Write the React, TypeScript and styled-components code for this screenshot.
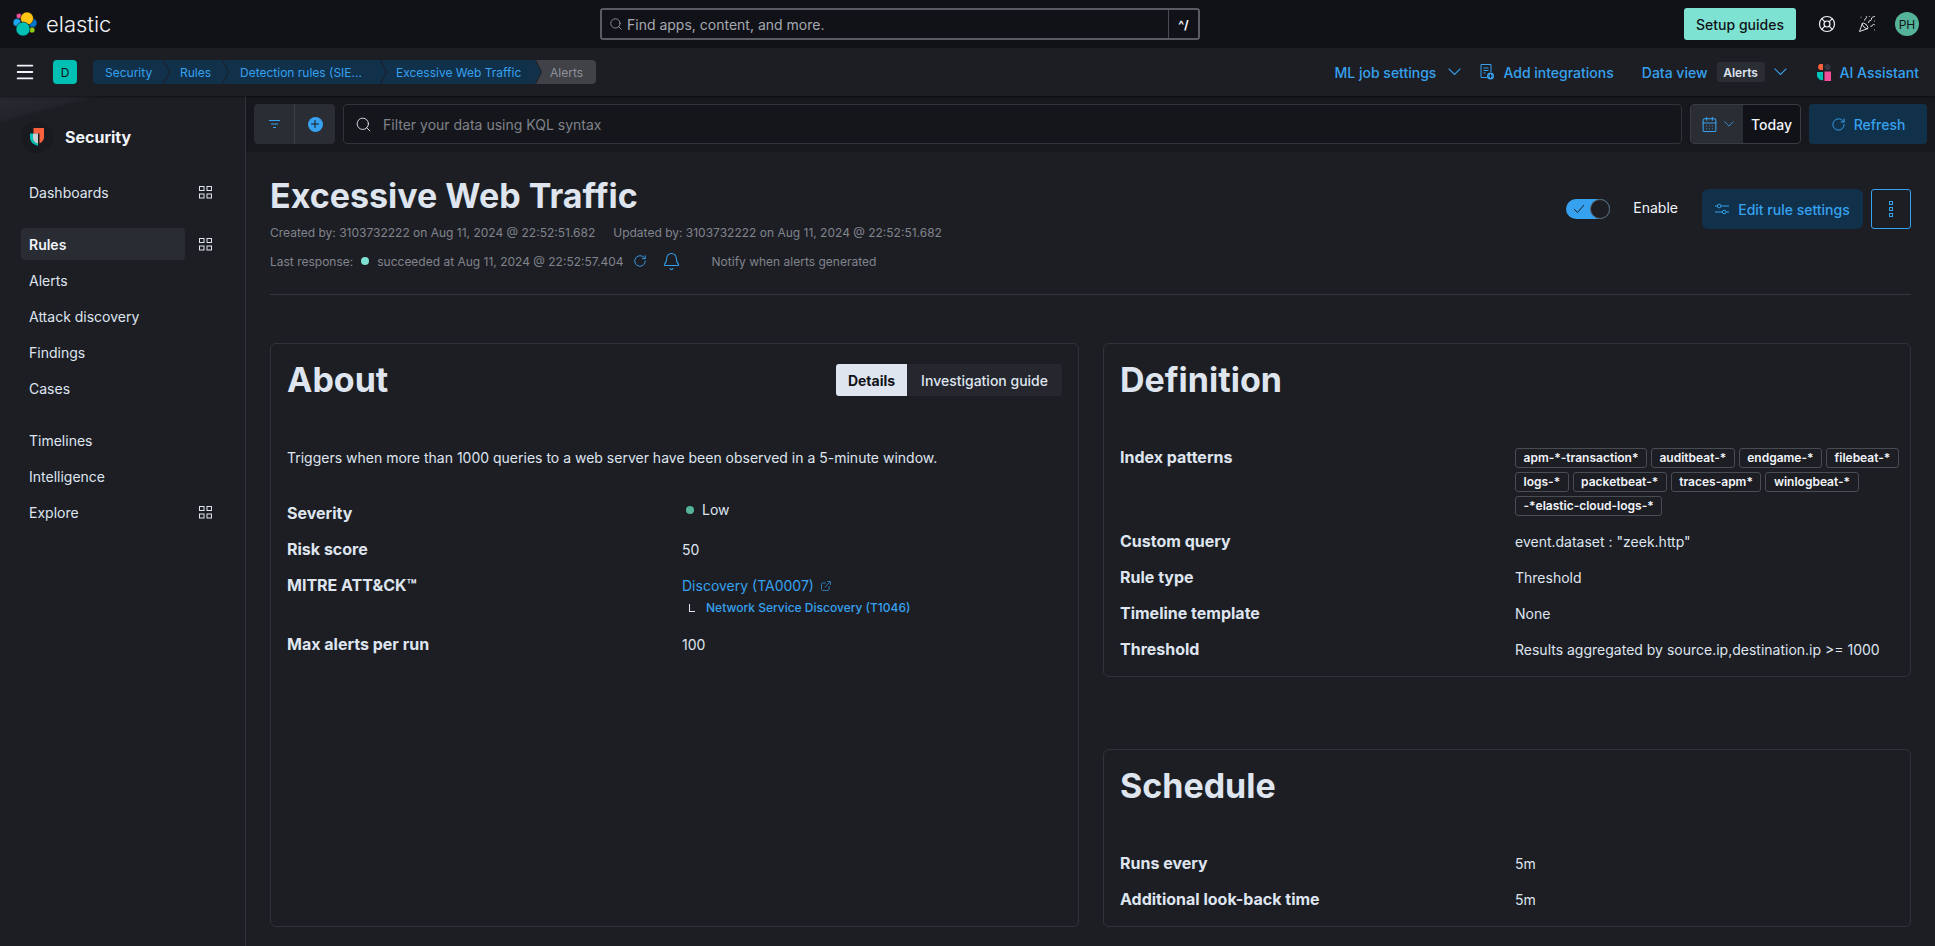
import React from 'react';
import styled, { createGlobalStyle } from 'styled-components';
import {
  Bell,
  CalendarDays,
  ExternalLink,
  LifeBuoy,
  Menu,
  PartyPopper,
  Plus,
  RotateCw,
  Search,
} from 'lucide-react';

const GlobalStyle = createGlobalStyle`
  html, body {
    margin: 0;
    height: 100%;
    overflow: hidden;
    background: #1d1e24;
    color: #dfe5ef;
    font-family: Inter, "Liberation Sans", sans-serif;
  }
  * { box-sizing: border-box; }
`;

const Page = styled.div`
  width: 1935px;
  height: 946px;
  display: flex;
  flex-direction: column;
  overflow: hidden;
`;

const TopBar = styled.header`
  height: 48px;
  flex: none;
  background: #111217;
  display: grid;
  grid-template-columns: 600px 600px 1fr;
  align-items: center;
`;

const Brand = styled.div`
  display: flex;
  align-items: center;
  gap: 9px;
  padding-left: 13px;
  font-size: 22px;
  font-weight: 300;
  color: #f1f4f9;
`;

const GlobalSearch = styled.div`
  width: 600px;
  height: 32px;
  border: 2px solid #5a5c63;
  border-radius: 3px;
  display: flex;
  align-items: center;
  color: #a5a9b2;
  font-size: 14px;
  padding-left: 7px;
  gap: 4px;
`;

const SearchText = styled.span`
  flex: 1;
`;

const Shortcut = styled.span`
  width: 30px;
  height: 100%;
  border-left: 1px solid #4a4c53;
  display: flex;
  align-items: center;
  justify-content: center;
  color: #f1f4f9;
  font-size: 12px;
  font-weight: 700;
`;

const TopActions = styled.div`
  display: flex;
  align-items: center;
  justify-content: flex-end;
  padding-right: 16px;
`;

const SetupButton = styled.button`
  width: 112px;
  height: 32px;
  margin-right: 15px;
  border: none;
  border-radius: 3px;
  background: #7de2d1;
  color: #111217;
  font: 500 14px Inter, sans-serif;
`;

const IconSlot = styled.span`
  width: 32px;
  margin-right: 8px;
  display: flex;
  justify-content: center;
  color: #f1f4f9;
`;

const Avatar = styled.span`
  width: 24px;
  height: 24px;
  margin-left: 4px;
  border-radius: 50%;
  background: #54b399;
  color: #111217;
  font-size: 12px;
  display: flex;
  align-items: center;
  justify-content: center;
`;

const SubBar = styled.div`
  height: 48px;
  flex: none;
  background: #1d1e24;
  box-shadow: 0 1px 2px rgba(0, 0, 0, 0.5);
  display: flex;
  align-items: center;
  padding: 0 16px 0 14px;
  position: relative;
  z-index: 1;
`;

const SpaceBadge = styled.span`
  width: 24px;
  height: 24px;
  margin: 0 16px 0 17px;
  border-radius: 4px;
  background: #00bfb3;
  color: #111217;
  font-size: 12px;
  display: flex;
  align-items: center;
  justify-content: center;
`;

const Crumbs = styled.nav`
  display: flex;
  height: 24px;
  flex: 1;
`;

const Crumb = styled.span<{ $first?: boolean; $last?: boolean; $w: number; $pad: number }>`
  width: ${(p) => p.$w}px;
  height: 24px;
  flex: none;
  margin-left: ${(p) => (p.$first ? 0 : -5)}px;
  padding-left: ${(p) => p.$pad}px;
  display: flex;
  align-items: center;
  white-space: nowrap;
  font-size: 12px;
  color: ${(p) => (p.$last ? '#8d9098' : '#36a2ef')};
  background: ${(p) => (p.$last ? '#404248' : '#11304a')};
  border-radius: ${(p) => (p.$first ? '4px 0 0 4px' : p.$last ? '0 4px 4px 0' : '0')};
  clip-path: ${(p) =>
    p.$first
      ? 'polygon(0 0, calc(100% - 6px) 0, 100% 50%, calc(100% - 6px) 100%, 0 100%)'
      : p.$last
        ? 'polygon(0 0, 100% 0, 100% 100%, 0 100%, 6px 50%)'
        : 'polygon(0 0, calc(100% - 6px) 0, 100% 50%, calc(100% - 6px) 100%, 0 100%, 6px 50%)'};
`;

const SubActions = styled.div`
  display: flex;
  align-items: center;
  color: #36a2ef;
  font-size: 14px;
  font-weight: 500;
`;

const SubAction = styled.span<{ $gap?: number; $inner?: number }>`
  display: flex;
  align-items: center;
  gap: ${(p) => p.$inner ?? 9}px;
  margin-right: ${(p) => p.$gap ?? 0}px;
`;

const ViewBadge = styled.span`
  height: 20px;
  width: 48px;
  border-radius: 3px;
  background: #2b2d35;
  color: #dfe5ef;
  font-size: 12px;
  font-weight: 600;
  display: flex;
  align-items: center;
  justify-content: center;
`;

const Body = styled.div`
  flex: 1;
  display: flex;
  min-height: 0;
`;

const Sidebar = styled.aside`
  width: 246px;
  flex: none;
  border-right: 1px solid #31333a;
  background: linear-gradient(165deg, #282a31 0, #24252c 22px, #1d1e24 27px);
  padding-left: 21px;
`;

const SideHead = styled.div`
  height: 78px;
  padding-top: 4px;
  display: flex;
  align-items: center;
  gap: 12px;
  font-size: 16px;
  font-weight: 700;
  color: #f1f4f9;
`;

const SideLogo = styled.span`
  width: 32px;
  height: 32px;
  display: flex;
  align-items: center;
  justify-content: center;
  border-radius: 50%;
  background: #191a1f;
`;

const SideGroup = styled.div`
  margin-bottom: 16px;
`;

const SideItem = styled.div`
  height: 36px;
  display: flex;
  align-items: center;
`;

const SideLabel = styled.span<{ $active?: boolean }>`
  width: 164px;
  height: 32px;
  display: flex;
  align-items: center;
  padding-left: 8px;
  border-radius: 4px;
  font-size: 14px;
  font-weight: ${(p) => (p.$active ? 600 : 400)};
  color: ${(p) => (p.$active ? '#f1f4f9' : '#dfe5ef')};
  background: ${(p) => (p.$active ? '#2a2c34' : 'transparent')};
`;

const SideIcon = styled.span`
  margin-left: 14px;
  display: flex;
  color: #dfe5ef;
`;

const Main = styled.main`
  flex: 1;
  min-width: 0;
  display: flex;
  flex-direction: column;
`;

const QueryBar = styled.div`
  height: 56px;
  flex: none;
  background: #17181d;
  display: flex;
  align-items: center;
  gap: 8px;
  padding: 0 8px;
`;

const FilterGroup = styled.div`
  display: flex;
  width: 81px;
  height: 40px;
  background: #2b2d35;
  border-radius: 4px;
  color: #36a2ef;
`;

const FilterCell = styled.span`
  flex: 1;
  display: flex;
  align-items: center;
  justify-content: center;
  & + & { border-left: 1px solid #3f4149; }
`;

const PlusDot = styled.span`
  width: 15px;
  height: 15px;
  border-radius: 50%;
  background: #36a2ef;
  color: #17181d;
  display: flex;
  align-items: center;
  justify-content: center;
`;

const KqlInput = styled.div`
  flex: 1;
  height: 40px;
  border: 1px solid #31333a;
  border-radius: 4px;
  background: #15161b;
  color: #7f828a;
  font-size: 14px;
  display: flex;
  align-items: center;
  gap: 11px;
  padding-left: 11px;
`;

const DateBox = styled.div`
  width: 111px;
  height: 40px;
  flex: none;
  border: 1px solid #3a3c43;
  border-radius: 4px;
  display: flex;
  overflow: hidden;
  background: #111217;
  font-size: 14px;
  font-weight: 500;
  color: #f1f4f9;
`;

const DatePrefix = styled.span`
  width: 52px;
  flex: none;
  background: #2b2d35;
  color: #36a2ef;
  display: flex;
  align-items: center;
  justify-content: center;
  gap: 6px;
`;

const DateValue = styled.span`
  flex: 1;
  display: flex;
  align-items: center;
  justify-content: center;
`;

const RefreshButton = styled.button`
  width: 118px;
  height: 40px;
  flex: none;
  border: none;
  border-radius: 4px;
  background: #11304a;
  color: #36a2ef;
  font: 500 14px Inter, sans-serif;
  display: flex;
  align-items: center;
  justify-content: center;
  gap: 8px;
`;

const Content = styled.div`
  flex: 1;
  min-height: 0;
  padding: 24px 24px 0;
`;

const RuleHeader = styled.div`
  height: 119px;
  display: flex;
  justify-content: space-between;
  border-bottom: 1px solid #34363d;
`;

const Title = styled.h1`
  margin: 0 0 4px;
  font-size: 34px;
  line-height: 40px;
  font-weight: 700;
  color: #dfe5ef;
`;

const Meta = styled.div`
  display: flex;
  align-items: center;
  height: 24px;
  font-size: 12px;
  color: #80848c;
  & + & { margin-top: 5px; }
`;

const MetaPart = styled.span<{ $w: number; $blue?: boolean }>`
  display: inline-flex;
  align-items: center;
  color: ${(p) => (p.$blue ? '#36a2ef' : 'inherit')};
  margin-left: ${(p) => p.$w}px;
`;

const Dot = styled.span<{ $color: string }>`
  width: 8px;
  height: 8px;
  border-radius: 50%;
  flex: none;
  background: ${(p) => p.$color};
`;

const HeaderActions = styled.div`
  display: flex;
  align-items: center;
  align-self: flex-start;
  height: 40px;
  margin-top: 13px;
`;

const Toggle = styled.span`
  position: relative;
  width: 44px;
  height: 20px;
  border-radius: 10px;
  background: #36a2ef;
  display: flex;
  align-items: center;
  padding-left: 7px;
  color: #1d1e24;
`;

const ToggleKnob = styled.span`
  position: absolute;
  right: 0;
  top: 0;
  width: 20px;
  height: 20px;
  border-radius: 50%;
  background: #1d1e24;
  border: 1px solid #5a5e68;
`;

const EnableLabel = styled.span`
  margin: -4px 24px 0 23px;
  font-size: 14px;
  color: #f1f4f9;
`;

const EditButton = styled.button`
  width: 161px;
  height: 40px;
  margin-right: 8px;
  border: none;
  border-radius: 6px;
  background: #11304a;
  color: #36a2ef;
  font: 500 14px Inter, sans-serif;
  display: flex;
  align-items: center;
  justify-content: center;
  gap: 9px;
`;

const MoreButton = styled.button`
  width: 40px;
  height: 40px;
  border: 1px solid #36a2ef;
  border-radius: 3px;
  background: transparent;
  color: #36a2ef;
  display: flex;
  align-items: center;
  justify-content: center;
  padding: 0;
`;

const Columns = styled.div`
  margin-top: 48px;
  display: grid;
  grid-template-columns: 809px 808px;
  gap: 24px;
  align-items: start;
`;

const Stack = styled.div`
  display: flex;
  flex-direction: column;
  gap: 72px;
`;

const Panel = styled.section<{ $h: number }>`
  height: ${(p) => p.$h}px;
  border: 1px solid #31333a;
  border-radius: 6px;
  padding: 20px 16px 16px;
  overflow: hidden;
`;

const PanelHead = styled.div`
  display: flex;
  justify-content: space-between;
  align-items: flex-start;
  height: 32px;
  margin-bottom: 49px;
`;

const PanelTitle = styled.h2`
  margin: 0;
  font-size: 34px;
  line-height: 32px;
  font-weight: 700;
  color: #dfe5ef;
`;

const Tabs = styled.div`
  display: flex;
  height: 32px;
  border-radius: 3px;
  overflow: hidden;
  background: #25262e;
  font-size: 14px;
  font-weight: 500;
`;

const Tab = styled.span<{ $active?: boolean }>`
  display: flex;
  align-items: center;
  padding: 0 ${(p) => (p.$active ? 12 : 14)}px;
  background: ${(p) => (p.$active ? '#dfe5ef' : 'transparent')};
  color: ${(p) => (p.$active ? '#111217' : '#dfe5ef')};
  font-weight: ${(p) => (p.$active ? 700 : 500)};
`;

const Description = styled.p`
  margin: 52px 0 33px;
  font-size: 14px;
  line-height: 20px;
  color: #dfe5ef;
`;

const Row = styled.div<{ $h?: number }>`
  display: grid;
  grid-template-columns: 395px 1fr;
  min-height: ${(p) => p.$h ?? 36}px;
  font-size: 14px;
  line-height: 20px;
`;

const Label = styled.div`
  font-size: 16px;
  font-weight: 700;
  line-height: 24px;
  color: #dfe5ef;
`;

const Value = styled.div`
  padding-top: 3px;
  color: #dfe5ef;
`;

const SeverityValue = styled(Value)`
  display: flex;
  align-items: center;
  gap: 8px;
  height: 20px;
  margin-top: -1px;
  padding: 0 0 0 4px;
`;

const TacticLink = styled.a`
  display: flex;
  align-items: center;
  gap: 6px;
  color: #36a2ef;
  font-size: 14px;
`;

const LinkGlyph = styled.span`
  display: flex;
  opacity: 0.65;
`;

const TechniqueLine = styled.div`
  display: flex;
  align-items: center;
  gap: 6px;
  margin-top: 2px;
  padding-left: 7px;
  color: #36a2ef;
  font-size: 12px;
  font-weight: 500;
`;

const Elbow = styled.span`
  width: 6px;
  height: 8px;
  margin-right: 5px;
  border-left: 1px solid #dfe5ef;
  border-bottom: 1px solid #dfe5ef;
`;

const Patterns = styled.div`
  display: flex;
  flex-wrap: wrap;
  align-content: flex-start;
  gap: 4px;
  margin: 3px -8px 0 0;
`;

const Pattern = styled.span`
  height: 20px;
  padding: 0 7.5px;
  border: 1px solid #4a4c53;
  border-radius: 3px;
  font-size: 12px;
  font-weight: 600;
  line-height: 18px;
  color: #f1f4f9;
`;

const ElasticLogo = () => (
  <svg width="24" height="24" viewBox="0 0 24 24" stroke="#111217" strokeWidth="0.6">
    <circle cx="6" cy="4" r="2.8" fill="#f04e98" />
    <circle cx="4" cy="10.5" r="4" fill="#1ba9f5" />
    <circle cx="19.5" cy="11" r="4.5" fill="#0077cc" />
    <circle cx="19" cy="18" r="3" fill="#93c90e" />
    <circle cx="14" cy="6.5" r="6.5" fill="#fec514" />
    <circle cx="10" cy="17" r="7" fill="#00bfb3" />
  </svg>
);

const SecurityLogo = () => (
  <svg width="14" height="18" viewBox="0 0 14 18">
    <path d="M3.5 0H14v9c0 3-1.5 5-4.5 6.5V5.5h-6z" fill="#f9603c" />
    <path d="M0 5.5h3v5c0 2.5 2 4 5 5.5v2C3 16.5 0 13.5 0 9.5z" fill="#00bfb3" />
    <path d="M3 5.5h5V16c-3-1.5-5-3-5-5.5z" fill="#e8f1f5" opacity="0.85" />
  </svg>
);

const AssistantLogo = () => (
  <svg width="14" height="17" viewBox="0 0 14 17">
    <path d="M6 6H3a3 3 0 0 1 3-6z" fill="#f9603c" />
    <circle cx="10.5" cy="3" r="3" fill="#343741" />
    <path d="M0 8h6v8a5 5 0 0 1-6-4z" fill="#00bfb3" />
    <rect x="7.5" y="7.5" width="6.5" height="9.5" fill="#f04e98" />
  </svg>
);

const AppsGrid = () => (
  <svg width="13" height="13" viewBox="0 0 13 13" fill="none" stroke="currentColor">
    <rect x="0.5" y="0.5" width="4.5" height="4" />
    <rect x="8" y="0.5" width="4.5" height="4" />
    <rect x="0.5" y="8" width="4.5" height="4" />
    <rect x="8" y="8" width="4.5" height="4" />
  </svg>
);

const FilterLines = () => (
  <svg width="11" height="8" viewBox="0 0 11 8" fill="none" stroke="currentColor">
    <path d="M0 .5h11M2 4h7M4 7.5h3" />
  </svg>
);

const DotsVertical = () => (
  <svg width="4" height="16" viewBox="0 0 4 16" fill="none" stroke="currentColor">
    <rect x="0.5" y="0.5" width="3" height="3" />
    <rect x="0.5" y="6.5" width="3" height="3" />
    <rect x="0.5" y="12.5" width="3" height="3" />
  </svg>
);

const CheckMark = () => (
  <svg width="12" height="10" viewBox="0 0 12 10" fill="none" stroke="currentColor">
    <path d="M1 5l3.5 3.5L11 1" />
  </svg>
);

const Chevron = ({ w }: { w: number }) => (
  <svg width={w} height={w / 2 + 1} viewBox="0 0 12 7" fill="none" stroke="currentColor">
    <path d="M.5.5 6 6l5.5-5.5" />
  </svg>
);

const IntegrationIcon = () => (
  <svg width="14" height="16" viewBox="0 0 14 16" fill="none" stroke="currentColor">
    <path d="M7 13.5H1v-13h10V8M3.5 4h5M3.5 6.5h5M3.5 9h2" />
    <circle cx="10.5" cy="12" r="3.5" fill="currentColor" stroke="none" />
    <path d="M10.5 10v4M8.5 12h4" stroke="#1d1e24" />
  </svg>
);

const TuneIcon = () => (
  <svg width="14" height="12" viewBox="0 0 14 12" fill="none" stroke="currentColor">
    <path d="M0 3h2.5M6 3h8M0 9h7.5M11 9h3" />
    <circle cx="4.2" cy="3" r="1.8" />
    <circle cx="9.2" cy="9" r="1.8" />
  </svg>
);

const crumbs = [
  { text: 'Security', w: 76, pad: 12 },
  { text: 'Rules', w: 64, pad: 16 },
  { text: 'Detection rules (SIE...', w: 163, pad: 17 },
  { text: 'Excessive Web Traffic', w: 160, pad: 15 },
  { text: 'Alerts', w: 60, pad: 14 },
];

const sideGroups = [
  [{ text: 'Dashboards', apps: true }],
  [
    { text: 'Rules', apps: true, active: true },
    { text: 'Alerts' },
    { text: 'Attack discovery' },
    { text: 'Findings' },
    { text: 'Cases' },
  ],
  [{ text: 'Timelines' }, { text: 'Intelligence' }, { text: 'Explore', apps: true }],
];

const patterns = [
  'apm-*-transaction*',
  'auditbeat-*',
  'endgame-*',
  'filebeat-*',
  'logs-*',
  'packetbeat-*',
  'traces-apm*',
  'winlogbeat-*',
  '-*elastic-cloud-logs-*',
];

export default function App() {
  return (
    <Page>
      <GlobalStyle />
      <TopBar>
        <Brand>
          <ElasticLogo />
          elastic
        </Brand>
        <GlobalSearch>
          <Search size={14} strokeWidth={1.3} />
          <SearchText>Find apps, content, and more.</SearchText>
          <Shortcut>^/</Shortcut>
        </GlobalSearch>
        <TopActions>
          <SetupButton>Setup guides</SetupButton>
          <IconSlot>
            <LifeBuoy size={18} strokeWidth={1.6} />
          </IconSlot>
          <IconSlot>
            <PartyPopper size={18} strokeWidth={1.2} />
          </IconSlot>
          <Avatar>PH</Avatar>
        </TopActions>
      </TopBar>
      <SubBar>
        <Menu size={22} color="#f1f4f9" />
        <SpaceBadge>D</SpaceBadge>
        <Crumbs>
          {crumbs.map((c, i) => (
            <Crumb key={c.text} $w={c.w} $pad={c.pad} $first={i === 0} $last={i === crumbs.length - 1}>
              {c.text}
            </Crumb>
          ))}
        </Crumbs>
        <SubActions>
          <SubAction $gap={19} $inner={12}>
            ML job settings <Chevron w={13} />
          </SubAction>
          <SubAction $gap={28}>
            <IntegrationIcon /> Add integrations
          </SubAction>
          <SubAction $gap={30}>
            Data view <ViewBadge>Alerts</ViewBadge>
            <Chevron w={13} />
          </SubAction>
          <SubAction>
            <AssistantLogo /> AI Assistant
          </SubAction>
        </SubActions>
      </SubBar>
      <Body>
        <Sidebar>
          <SideHead>
            <SideLogo>
              <SecurityLogo />
            </SideLogo>
            Security
          </SideHead>
          {sideGroups.map((group) => (
            <SideGroup key={group[0].text}>
              {group.map((item) => (
                <SideItem key={item.text}>
                  <SideLabel $active={'active' in item && item.active}>{item.text}</SideLabel>
                  {'apps' in item && item.apps && (
                    <SideIcon>
                      <AppsGrid />
                    </SideIcon>
                  )}
                </SideItem>
              ))}
            </SideGroup>
          ))}
        </Sidebar>
        <Main>
          <QueryBar>
            <FilterGroup>
              <FilterCell>
                <FilterLines />
              </FilterCell>
              <FilterCell>
                <PlusDot>
                  <Plus size={12} strokeWidth={2} />
                </PlusDot>
              </FilterCell>
            </FilterGroup>
            <KqlInput>
              <Search size={17} strokeWidth={1.3} color="#dfe5ef" />
              Filter your data using KQL syntax
            </KqlInput>
            <DateBox>
              <DatePrefix>
                <CalendarDays size={17} strokeWidth={1.5} />
                <Chevron w={10} />
              </DatePrefix>
              <DateValue>Today</DateValue>
            </DateBox>
            <RefreshButton>
              <RotateCw size={15} strokeWidth={1.5} />
              Refresh
            </RefreshButton>
          </QueryBar>
          <Content>
            <RuleHeader>
              <div>
                <Title>Excessive Web Traffic</Title>
                <Meta>
                  Created by: 3103732222 on Aug 11, 2024 @ 22:52:51.682
                  <MetaPart $w={18}>Updated by: 3103732222 on Aug 11, 2024 @ 22:52:51.682</MetaPart>
                </Meta>
                <Meta>
                  Last response:
                  <MetaPart $w={8}>
                    <Dot $color="#7de2d1" />
                  </MetaPart>
                  <MetaPart $w={8}>succeeded at Aug 11, 2024 @ 22:52:57.404</MetaPart>
                  <MetaPart $w={9} $blue>
                    <RotateCw size={14} strokeWidth={1.5} />
                  </MetaPart>
                  <MetaPart $w={15} $blue>
                    <Bell size={19} strokeWidth={1.3} />
                  </MetaPart>
                  <MetaPart $w={31}>Notify when alerts generated</MetaPart>
                </Meta>
              </div>
              <HeaderActions>
                <Toggle>
                  <CheckMark />
                  <ToggleKnob />
                </Toggle>
                <EnableLabel>Enable</EnableLabel>
                <EditButton>
                  <TuneIcon />
                  Edit rule settings
                </EditButton>
                <MoreButton>
                  <DotsVertical />
                </MoreButton>
              </HeaderActions>
            </RuleHeader>
            <Columns>
              <Panel $h={584}>
                <PanelHead>
                  <PanelTitle>About</PanelTitle>
                  <Tabs>
                    <Tab $active>Details</Tab>
                    <Tab>Investigation guide</Tab>
                  </Tabs>
                </PanelHead>
                <Description>
                  Triggers when more than 1000 queries to a web server have been observed in a
                  5-minute window.
                </Description>
                <Row>
                  <Label>Severity</Label>
                  <SeverityValue>
                    <Dot $color="#54b399" />
                    Low
                  </SeverityValue>
                </Row>
                <Row>
                  <Label>Risk score</Label>
                  <Value>50</Value>
                </Row>
                <Row $h={59}>
                  <Label>MITRE ATT&amp;CK™</Label>
                  <Value>
                    <TacticLink>
                      Discovery (TA0007)
                      <LinkGlyph>
                        <ExternalLink size={12} />
                      </LinkGlyph>
                    </TacticLink>
                    <TechniqueLine>
                      <Elbow />
                      Network Service Discovery (T1046)
                    </TechniqueLine>
                  </Value>
                </Row>
                <Row>
                  <Label>Max alerts per run</Label>
                  <Value>100</Value>
                </Row>
              </Panel>
              <Stack>
                <Panel $h={334}>
                  <PanelHead>
                    <PanelTitle>Definition</PanelTitle>
                  </PanelHead>
                  <Row $h={84}>
                    <Label>Index patterns</Label>
                    <Patterns>
                      {patterns.map((p) => (
                        <Pattern key={p}>{p}</Pattern>
                      ))}
                    </Patterns>
                  </Row>
                  <Row>
                    <Label>Custom query</Label>
                    <Value>event.dataset : "zeek.http"</Value>
                  </Row>
                  <Row>
                    <Label>Rule type</Label>
                    <Value>Threshold</Value>
                  </Row>
                  <Row>
                    <Label>Timeline template</Label>
                    <Value>None</Value>
                  </Row>
                  <Row>
                    <Label>Threshold</Label>
                    <Value>Results aggregated by source.ip,destination.ip &gt;= 1000</Value>
                  </Row>
                </Panel>
                <Panel $h={178}>
                  <PanelHead>
                    <PanelTitle>Schedule</PanelTitle>
                  </PanelHead>
                  <Row>
                    <Label>Runs every</Label>
                    <Value>5m</Value>
                  </Row>
                  <Row>
                    <Label>Additional look-back time</Label>
                    <Value>5m</Value>
                  </Row>
                </Panel>
              </Stack>
            </Columns>
          </Content>
        </Main>
      </Body>
    </Page>
  );
}
